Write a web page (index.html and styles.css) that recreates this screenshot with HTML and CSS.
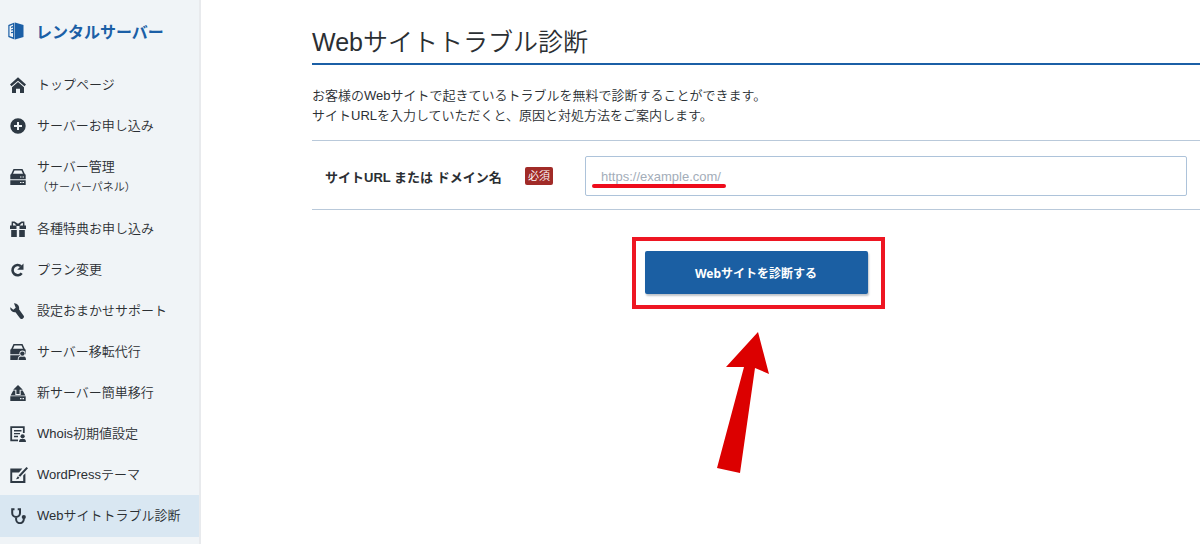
FILE: index.html
```html
<!DOCTYPE html>
<html lang="ja">
<head>
<meta charset="utf-8">
<meta name="viewport" content="width=device-width, initial-scale=1">
<title>Webサイトトラブル診断</title>
<link rel="stylesheet" href="styles.css">
</head>
<body>
<div class="layout">
  <aside class="sidebar">
    <a class="brand" href="#">
      <svg class="brand-icon" viewBox="0 0 16 18" aria-hidden="true"><path fill="#1b5fa6" d="M7 .5L15.500 3v12L7 17.500z"/><path fill="#1b5fa6" d="M6.500 .5v17L.3 15V3z"/><path fill="#f0f4f7" d="M1.500 4l3.500-1.400v1.500l-2 .6v1.200l2-.5v1.500l-2 .5v1.200l2-.4v1.500l-2 .3v1.200l2-.1v4.200l-3.500-1.200z"/></svg>
      <span>レンタルサーバー</span>
    </a>
    <nav>
      <ul class="menu">
        <li><a class="menu-link" href="#"><svg class="icon" viewBox="0 0 16 16" aria-hidden="true"><path d="M8 .3l8 7.200-1.500 1.800L8 3.700 1.500 9.300 0 7.500z"/><path d="M8 5l6 5.200V16h-4v-4.300H6V16H2v-5.800z"/></svg><span>トップページ</span></a></li>
        <li><a class="menu-link" href="#"><svg class="icon" viewBox="0 0 16 16" aria-hidden="true"><path fill-rule="evenodd" d="M8 .3a7.700 7.700 0 110 15.400A7.700 7.700 0 018 .3zM7 4v3H4v2h3v3h2V9h3V7H9V4z"/></svg><span>サーバーお申し込み</span></a></li>
        <li><a class="menu-link" href="#"><svg class="icon" viewBox="0 0 16 16" aria-hidden="true"><path fill-rule="evenodd" d="M3.500 0h9l2.800 6H.7zM4.500 1.500L3 4.700h10l-1.500-3.200z"/><path fill-rule="evenodd" d="M.3 5.500h15.400v4.800H.3zM10 7.500v1h1.500v-1zm2.500 0v1H14v-1zM.3 11.300h15.400V16H.3zM10 13v1h1.500v-1zm2.500 0v1H14v-1z"/></svg><span>サーバー管理<small>（サーバーパネル）</small></span></a></li>
        <li><a class="menu-link" href="#"><svg class="icon" viewBox="0 0 16 16" aria-hidden="true"><path fill-rule="evenodd" d="M0 4.500h1.500L1.700.5h2.800L8 2.800 11.500.5h2.800l.2 4H16V8H9.500V5h-3v3H0zM3 4.500h3.500L4 2H3.200zm6.500 0H13L12.800 2H12z"/><path d="M1.200 9h5.600v7H1.200zM9.200 9h5.600v7H9.200z"/></svg><span>各種特典お申し込み</span></a></li>
        <li><a class="menu-link" href="#"><svg class="icon" viewBox="0 0 16 16" aria-hidden="true"><path fill="none" stroke="#2e3944" stroke-width="2.600" d="M11.700 11.200A5.100 5.100 0 1111 4.300"/><path d="M13.500 1.500v6.300H7.200z"/></svg><span>プラン変更</span></a></li>
        <li><a class="menu-link" href="#"><svg class="icon" viewBox="0 0 16 16" aria-hidden="true"><path d="M4 .3a4.800 4.800 0 015 6l4.300 5.900a2.100 2.100 0 01-3.300 3L5.500 9.300A4.500 4.500 0 01.3 4.200L3.300 6.800l2.400-2z"/></svg><span>設定おまかせサポート</span></a></li>
        <li><a class="menu-link" href="#"><svg class="icon" viewBox="0 0 16 16" aria-hidden="true"><path fill-rule="evenodd" d="M3.500 0h9l2.800 6H.7zM4.500 1.500L3 4.700h10l-1.500-3.200z"/><path d="M.3 5.500h15.400v4.800H.3zM.3 11.300h11V16H.3z"/><g stroke="#f0f4f7" stroke-width="1.600" paint-order="stroke"><path d="M8.500 16c0-2.800 1.400-3.500 2.500-3.500h3c1 0 2 .7 2 3.500z"/><circle cx="12.400" cy="9.600" r="2.200"/></g></svg><span>サーバー移転代行</span></a></li>
        <li><a class="menu-link" href="#"><svg class="icon" viewBox="0 0 16 16" aria-hidden="true"><path d="M8 0l4.800 4.700H9.600V9H6.400V4.700H3.200z"/><path d="M3.300 5.500h2V10h5.400V5.500h2l2.700 5H.6z"/><path fill-rule="evenodd" d="M.3 11.200h15.400V16H.3zM10 13v1.200h1.500V13zm2.500 0v1.200H14V13z"/></svg><span>新サーバー簡単移行</span></a></li>
        <li><a class="menu-link" href="#"><svg class="icon" viewBox="0 0 16 16" aria-hidden="true"><path fill="none" stroke="#2e3944" stroke-width="1.800" d="M8 14.300H1.200V1.200h12.600V7"/><path d="M4 4h7.500v1.400H4zM4 6.900h6v1.400H4zM4 9.800h4v1.400H4z"/><circle cx="12.600" cy="10.300" r="2.100"/><path d="M9 16c0-2.500 1.400-3 2.500-3h2c1.100 0 2.500.5 2.500 3z"/></svg><span>Whois初期値設定</span></a></li>
        <li><a class="menu-link" href="#"><svg class="icon icon-wide" viewBox="0 0 18 16" aria-hidden="true"><path d="M.3 1.500h12L9 5.500H2.200V14h11V8.500l2.200-2.300V16H.3z"/><path d="M16.500 0L18 1.300l-7.800 8.500-1.700-1.300zM7.800 9.200l1.600 1.300-.8 1.200-2.600.5z"/></svg><span>WordPressテーマ</span></a></li>
        <li><a class="menu-link menu-link-active" href="#" aria-current="page"><svg class="icon" viewBox="0 0 16 16" aria-hidden="true"><path fill="none" stroke="#2e3944" stroke-width="2" d="M4.500 1.300H2.200V5a3.900 3.900 0 007.800 0V1.300H7.700M6.100 8.800v2.500a3.800 3.800 0 007.700 0V10"/><circle cx="13.800" cy="9" r="2.100"/></svg><span>Webサイトトラブル診断</span></a></li>
      </ul>
    </nav>
  </aside>
  <main class="content">
    <h1 class="title">Webサイトトラブル診断</h1>
    <p class="lead">お客様のWebサイトで起きているトラブルを無料で診断することができます。<br>サイトURLを入力していただくと、原因と対処方法をご案内します。</p>
    <form>
      <div class="field">
        <label class="field-label" for="url">サイトURL または ドメイン名</label>
        <span class="required">必須</span>
        <div class="field-control">
          <input class="field-input" id="url" type="text" placeholder="https://example.com/">
          <span class="underline"></span>
        </div>
      </div>
      <div class="actions">
        <div class="highlight">
          <button class="submit" type="button">Webサイトを診断する</button>
          <svg class="arrow" viewBox="0 0 54 142" aria-hidden="true"><path fill="#dc0000" d="M42 0l11 42-14-6-15 105-23-5L28 35H10z"/></svg>
        </div>
      </div>
    </form>
  </main>
</div>
</body>
</html>
```
FILE: styles.css
```css
* {
  box-sizing: border-box;
}

body {
  margin: 0;
  background: #fff;
  color: #2b2f33;
  font-family: "Liberation Sans", "Noto Sans CJK JP", sans-serif;
  font-size: 13px;
  font-weight: 350;
}

.layout {
  display: flex;
  min-height: 100vh;
}

.sidebar {
  flex: 0 0 201px;
  border-right: 2px solid #e8eaed;
  background: #f0f4f7;
}

.brand {
  display: flex;
  align-items: center;
  gap: 12px;
  height: 62px;
  padding-left: 8px;
  color: #1b5fa6;
  font-size: 16px;
  font-weight: 700;
  text-decoration: none;
}

.brand-icon {
  width: 16px;
  height: 18px;
}

.menu {
  margin: 0;
  padding: 2px 0 0;
  list-style: none;
}

.menu-link {
  display: flex;
  align-items: center;
  gap: 11px;
  min-height: 41px;
  padding: 0 10px;
  color: #2b2f33;
  line-height: 20px;
  text-decoration: none;
  white-space: nowrap;
}

.menu-link:has(small) {
  min-height: 62px;
}

.menu-link small {
  display: block;
  font-size: 11px;
}

.menu-link-active {
  min-height: 42px;
  background: #d9e7f2;
}

.icon {
  flex: none;
  width: 16px;
  height: 16px;
  fill: #2e3944;
}

.icon-wide {
  width: 18px;
  margin-right: -2px;
}

.content {
  flex: 1;
  min-width: 0;
  padding: 22px 0 0 111px;
}

.title {
  margin: 0 0 21px;
  padding-bottom: 1px;
  border-bottom: 2px solid #1b5fa6;
  font-size: 25px;
  font-weight: 350;
  line-height: 40px;
}

.lead {
  margin: 0 0 14px;
  line-height: 20px;
}

.field {
  display: flex;
  align-items: center;
  padding: 15px 13px 13px;
  border-top: 1px solid #b9c9da;
  border-bottom: 1px solid #b9c9da;
}

.field-label {
  flex: 0 0 200px;
  font-weight: 700;
  white-space: nowrap;
}

.required {
  padding: 0 3px;
  border-radius: 2px;
  background: #a12b28;
  color: #fff;
  font-size: 11px;
  line-height: 18px;
}

.field-control {
  position: relative;
  flex: 1;
  margin-left: 32px;
}

.field-input {
  display: block;
  width: 100%;
  height: 40px;
  padding: 0 15px;
  border: 1px solid #adc3da;
  border-radius: 2px;
  font-family: inherit;
  font-size: 13px;
}

.field-input::placeholder {
  color: #a3adb9;
}

.underline {
  position: absolute;
  bottom: 8px;
  left: 7px;
  width: 134px;
  height: 4px;
  border-radius: 2px;
  background: #ee0b1b;
}

.actions {
  display: flex;
  justify-content: center;
  padding: 27px 0 0 4px;
}

.highlight {
  position: relative;
  padding: 10px 13px 11px 9px;
  border: 4px solid #ee1622;
}

.submit {
  display: block;
  width: 223px;
  height: 43px;
  border: 0;
  border-radius: 2px;
  background: #1b5fa3;
  box-shadow: 1px 2px 2px #c0c5ca;
  color: #fff;
  font-family: "Noto Sans", "Noto Sans CJK JP", sans-serif;
  font-size: 12px;
  font-weight: 700;
}

.arrow {
  position: absolute;
  top: 91px;
  left: 80px;
  width: 54px;
  height: 142px;
}
```
